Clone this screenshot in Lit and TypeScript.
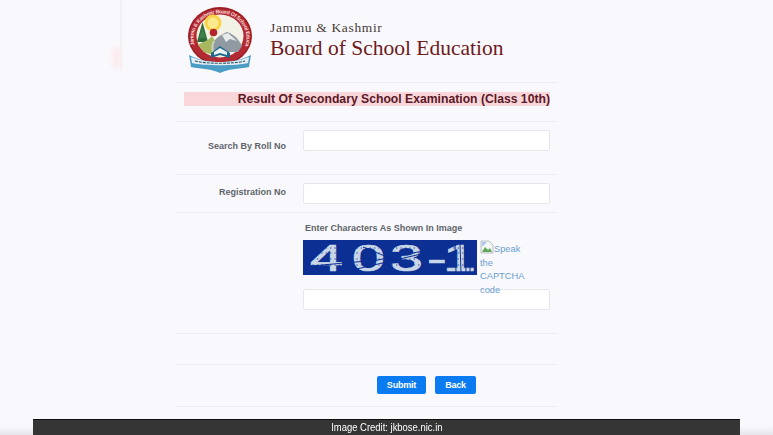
import { LitElement, html, css, svg } from "lit";
import { customElement } from "lit/decorators.js";

const logo = svg`<svg class="logo" viewBox="0 0 64 68" width="64" height="68">
  <defs><path id="ring" d="M6.5 40 A26.5 25 0 1 1 57.5 40"/></defs>
  <ellipse cx="32" cy="31" rx="32" ry="29" fill="#b42a33"/>
  <ellipse cx="32" cy="31" rx="31" ry="28" fill="none" stroke="#8e1a22" stroke-width="1"/>
  <text font-family="Liberation Sans, sans-serif" font-size="5.2" font-weight="700" fill="#f6dcd9"><textPath href="#ring" textLength="104" lengthAdjust="spacing">Jammu &amp; Kashmir Board Of School Education</textPath></text>
  <ellipse cx="32" cy="31" rx="23.5" ry="21.5" fill="#f3f2e6"/>
  <circle cx="25" cy="18" r="8.5" fill="#f7d448"/>
  <circle cx="25" cy="18" r="5.5" fill="#fbe98e"/>
  <path d="M14.5 17 L20 37 L9 37Z" fill="#2f6b3a"/>
  <path d="M14.5 23 L18 33 L11 33Z" fill="#3f8048"/>
  <circle cx="25.5" cy="27.5" r="3.8" fill="#b5262c"/>
  <path d="M22 43 C27 32 33 30 39 27 C45 29 50 33 54 41 L50 47 L26 47Z" fill="#8f9aa3"/>
  <path d="M34 30 L40 28 L49 36 L42 34 L38 37Z" fill="#e9eced"/>
  <path d="M10 40 C15 36 19 37 24 31 L27 36 C23 42 24 46 25 50 L16 47Z" fill="#a7b85f"/>
  <path d="M26 36 C23 42 24 46 27 50" stroke="#cfd0c4" stroke-width="2" fill="none"/>
  <path d="M23 48 L32 41 L42 48 L42 53 L32 50 L23 53Z" fill="#1f6a8c"/>
  <path d="M26 47 L32 43 L39 47 L39 50 L32 48 L26 50Z" fill="#eaf2f4"/>
  <path d="M1 50 C11 55 21 57 32 57 C43 57 53 55 63 50 L61 62 C50 64 40 64 32 68 C24 64 14 64 3 62Z" fill="#4c9dc6"/>
  <path d="M3 52 C13 56 22 57 32 57 C42 57 51 56 61 52 L60 58 C50 61 14 61 4 58Z" fill="#e3edf2"/>
  <path d="M7 56 C18 59 46 59 57 56" stroke="#2b566d" stroke-width="1.1" stroke-dasharray="3 1" fill="none"/>
</svg>`;

const captcha = svg`<svg class="captcha" viewBox="0 0 174 35" width="174" height="35">
  <rect width="174" height="35" fill="#0b2f92"/>
  <text transform="scale(1.6 1)" x="4.4 30.6 54.4 77.5 87.5" y="31" font-family="Liberation Sans, sans-serif" font-size="37" fill="#c9d6e6" stroke="#c9d6e6" stroke-width=".7">403-1</text>
  <path d="M8 26 L75 20 L150 5 M45 31 L118 14 M60 7 L108 27" stroke="#0b2f92" stroke-width="1" fill="none"/>
  <path d="M5 25 H170 M5 19 H170 M5 13 H170 M5 8 H170" stroke="#0b2f92" stroke-width=".8" stroke-dasharray="1.4 3" fill="none"/>
  <path d="M152 4 L153 32 M157 4 L158 32 M162 4 L163 32 M167 6 L167 32" stroke="#0b2f92" stroke-width="1" fill="none"/>
</svg>`;

const broken = svg`<svg class="broken" viewBox="0 0 14 14" width="14" height="14">
  <path d="M1 1 H9 L13 5 V13 H1Z" fill="#f4f6f4" stroke="#a9aeb3" stroke-width=".8"/>
  <path d="M2 12 L5 7 L8 10 L10 8 L12 12Z" fill="#5fa85a"/>
  <path d="M2 2 H7 L3 6 H2Z" fill="#a9c7ee"/>
</svg>`;

@customElement("app-root")
export class AppRoot extends LitElement {
  static styles = css`
    :host {
      display: block;
      position: relative;
      width: 773px;
      height: 435px;
      overflow: hidden;
      background: #f9f9fd;
      font-family: "Liberation Sans", Arial, sans-serif;
    }
    .edge {
      position: absolute;
      left: 120px;
      top: 0;
      width: 2px;
      height: 70px;
      background: #f1f1f5;
      filter: blur(0.6px);
    }
    .blush {
      position: absolute;
      left: 112px;
      top: 48px;
      width: 9px;
      height: 20px;
      background: #fbecef;
      filter: blur(2px);
    }
    .shade {
      position: absolute;
      left: 0;
      right: 0;
      bottom: 0;
      height: 9px;
      background: linear-gradient(rgba(225, 225, 230, 0), #e6e6ea);
    }
    .form {
      position: relative;
      margin-left: 176px;
      width: 382px;
      display: flex;
      flex-direction: column;
    }
    .row {
      box-sizing: border-box;
      border-bottom: 1px solid #eeeef2;
    }
    .header {
      height: 83px;
      display: flex;
      gap: 18px;
      padding: 5px 0 0 12px;
    }
    .logo {
      display: block;
      flex: none;
      overflow: visible;
    }
    .brand {
      color: #6e1a20;
      font-family: "Liberation Serif", serif;
      padding-top: 15px;
    }
    .brand .top {
      font-size: 13.5px;
      line-height: 16px;
      letter-spacing: 0.65px;
      color: #4a3a3a;
    }
    .brand .main {
      font-size: 21.5px;
      line-height: 25px;
      white-space: nowrap;
    }
    .title {
      height: 39px;
      padding: 9px 8px 0;
    }
    .title div {
      height: 14px;
      background: #f9d6da;
      text-align: right;
      font-weight: 700;
      font-size: 12.2px;
      line-height: 14px;
      color: #5b1726;
      white-space: nowrap;
    }
    .field {
      display: grid;
      grid-template-columns: 110px 247px;
      column-gap: 17px;
      font-size: 9px;
      font-weight: 700;
      color: #5f646a;
    }
    .roll {
      height: 53px;
      padding-top: 8px;
    }
    .reg {
      height: 38px;
      padding-top: 8px;
    }
    .roll label {
      text-align: right;
      padding-top: 11px;
    }
    .reg label {
      text-align: right;
      padding-top: 4px;
    }
    .box {
      display: block;
      box-sizing: border-box;
      width: 247px;
      height: 21px;
      background: #fff;
      border: 1px solid #e6e6ec;
      border-radius: 2px;
      padding: 0;
      margin: 0;
    }
    .cap {
      height: 121px;
      padding: 9px 0 0 127px;
      display: flex;
      flex-direction: column;
    }
    .cap .hint {
      font-size: 9px;
      font-weight: 700;
      line-height: 12px;
      color: #5f646a;
      padding-left: 2px;
    }
    .cap .pic {
      display: flex;
      gap: 3px;
      height: 35px;
      margin-top: 6px;
      position: relative;
      z-index: 1;
    }
    .captcha {
      display: block;
      flex: none;
      overflow: visible;
    }
    .alt {
      width: 48px;
      font-size: 9.3px;
      line-height: 13.6px;
      color: #6a9fd0;
      text-decoration: none;
    }
    .broken {
      vertical-align: -2px;
    }
    .cap .box {
      margin-top: 14px;
    }
    .blank {
      height: 31px;
    }
    .actions {
      height: 42px;
      padding: 11px 0 0 201px;
      display: flex;
      gap: 9px;
      align-items: flex-start;
    }
    .btn {
      height: 18px;
      box-sizing: border-box;
      border: none;
      border-radius: 2px;
      background: #0a7bf0;
      color: #fff;
      font: 700 9px/18px "Liberation Sans", Arial, sans-serif;
      letter-spacing: -0.2px;
      padding: 0;
    }
    .submit {
      width: 49px;
    }
    .back {
      width: 41px;
    }
    .credit {
      position: absolute;
      left: 33px;
      right: 33px;
      bottom: 0;
      height: 16px;
      box-sizing: border-box;
      background: #353535;
      border-top: 1px solid #111;
      color: #fff;
      text-align: center;
      font-size: 10.5px;
      line-height: 15px;
    }
    .credit span {
      display: inline-block;
      transform: scaleX(0.9);
    }
  `;

  render() {
    return html`
      <div class="shade"></div>
      <div class="edge"></div>
      <div class="blush"></div>
      <div class="form">
        <div class="row header">
          ${logo}
          <div class="brand">
            <div class="top">Jammu &amp; Kashmir</div>
            <div class="main">Board of School Education</div>
          </div>
        </div>
        <div class="row title"><div>Result Of Secondary School Examination (Class 10th)</div></div>
        <div class="row field roll">
          <label>Search By Roll No</label>
          <input class="box" />
        </div>
        <div class="row field reg">
          <label>Registration No</label>
          <input class="box" />
        </div>
        <div class="row cap">
          <div class="hint">Enter Characters As Shown In Image</div>
          <div class="pic">
            ${captcha}
            <a class="alt" href="#">${broken}Speak the CAPTCHA code</a>
          </div>
          <input class="box" />
        </div>
        <div class="row blank"></div>
        <div class="row actions">
          <button class="btn submit">Submit</button>
          <button class="btn back">Back</button>
        </div>
      </div>
      <div class="credit"><span>Image Credit: jkbose.nic.in</span></div>
    `;
  }
}
